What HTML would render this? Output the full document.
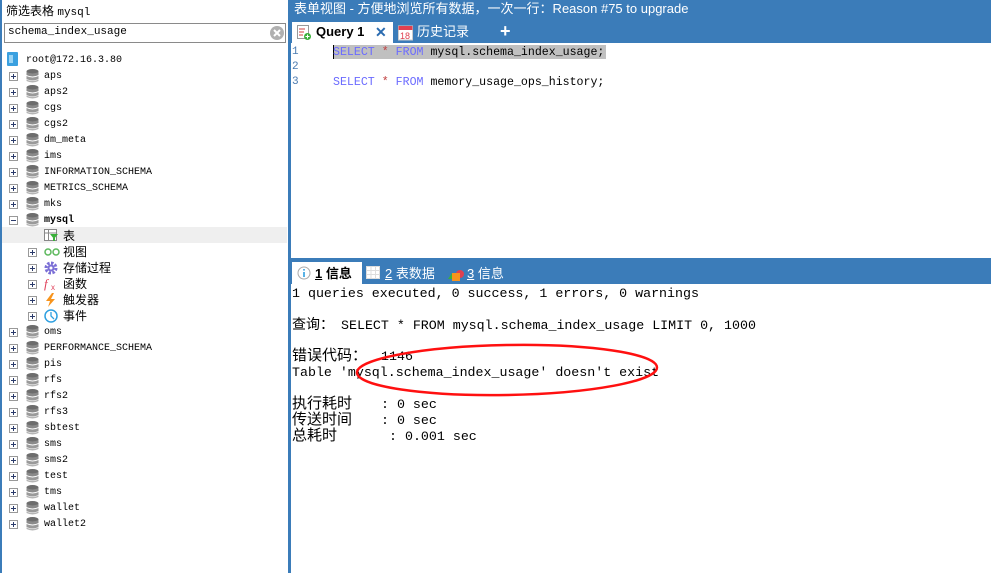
<!DOCTYPE html>
<html><head><meta charset="utf-8"><style>
*{margin:0;padding:0;box-sizing:border-box}
body{width:991px;height:573px;overflow:hidden;background:#fff;position:relative;font-family:"Liberation Mono","Noto Sans CJK SC",monospace}
.abs{position:absolute}
.cjk{font-family:"Liberation Sans","Noto Sans CJK SC",sans-serif}
#left{left:0;top:0;width:291px;height:573px;border-left:2px solid #3b7cb9;border-right:3px solid #3b7cb9;background:#fff}
.row{position:absolute;height:16px;font-size:10px;line-height:16px;color:#000;white-space:nowrap}
.pb{position:absolute;width:9px;height:9px;border:1px solid #999;background:#fff;top:4px}
.pb:before{content:"";position:absolute;left:1px;top:3px;width:5px;height:1px;background:#2b3b6b}
.pb.p:after{content:"";position:absolute;left:3px;top:1px;width:1px;height:5px;background:#2b3b6b}
.mono{font-family:"Liberation Mono",monospace}
.o{position:absolute;font-size:13.3px;line-height:16px;white-space:pre;font-family:"Liberation Mono","Noto Sans CJK SC",monospace}
</style></head><body>
<div id="left" class="abs">
 <div class="abs cjk" style="left:4px;top:2px;font-size:12px;">筛选表格 <span class="mono" style="font-size:11px">mysql</span></div>
 <div class="abs" style="left:2px;top:23px;width:282px;height:20px;border:1px solid #8a8a8a;background:#fff">
  <span class="abs mono" style="left:3px;top:2px;font-size:11px">schema_index_usage</span>
  <svg class="abs" style="left:264px;top:1px" width="16" height="16"><circle cx="8" cy="8" r="7" fill="#b0b0b0"/><path d="M5 5L11 11M11 5L5 11" stroke="#fff" stroke-width="2"/></svg>
 </div>
</div>
<svg class="abs" style="left:7px;top:52px" width="12" height="15"><rect x="0" y="0" width="11" height="14" rx="1" fill="#3aa0e0"/><rect x="2" y="3" width="4" height="8" fill="#9ad4f5"/></svg>
<div class="row" style="left:26px;top:53px">root@172.16.3.80</div>
<div id="tree"></div>
<script>
var dbs=[["aps",75],["aps2",91],["cgs",107],["cgs2",123],["dm_meta",139],["ims",155],["INFORMATION_SCHEMA",171],["METRICS_SCHEMA",187],["mks",203],["mysql",219],["oms",331],["PERFORMANCE_SCHEMA",347],["pis",363],["rfs",379],["rfs2",395],["rfs3",411],["sbtest",427],["sms",443],["sms2",459],["test",475],["tms",491],["wallet",507],["wallet2",523]];
var h="";
dbs.forEach(function(d){var y=d[1]-6;var m=d[0]=="mysql";
h+='<div class="pb '+(m?'':'p')+'" style="left:9px;top:'+(y+3)+'px"></div>';
h+='<svg class="abs" style="left:26px;top:'+(y)+'px" width="13" height="14"><ellipse cx="6.5" cy="2.5" rx="6" ry="2.5" fill="#6d6d6d"/><path d="M0.5 3v3q6 3 12 0v-3q-6 3 -12 0z" fill="#8a8a8a"/><path d="M0.5 7v3q6 3 12 0v-3q-6 3 -12 0z" fill="#9a9a9a"/><path d="M0.5 10.5v1.5q6 3 12 0v-1.5q-6 3 -12 0z" fill="#b5b5b5"/></svg>';
h+='<div class="row" style="left:44px;top:'+y+'px;'+(m?'font-weight:bold':'')+'">'+d[0]+'</div>';});
h+='<div class="abs" style="left:2px;top:227px;width:285px;height:16px;background:#efefef"></div>';
h+='<svg class="abs" style="left:44px;top:229px" width="15" height="13"><rect x="0.5" y="0.5" width="12" height="11" fill="#fff" stroke="#888"/><path d="M0.5 4h12M4.5 0.5v11" stroke="#888"/><path d="M6 5h8l-4 5z" fill="#3ab03a"/><rect x="9" y="9" width="2" height="3" fill="#3ab03a"/></svg>';
h+='<div class="row cjk" style="left:63px;top:228px;font-size:12px">表</div>';
var ch=[["视图",251],["存储过程",267],["函数",283],["触发器",299],["事件",315]];
var ic=['<svg width="16" height="14"><circle cx="4" cy="7" r="3" fill="none" stroke="#5cb85c" stroke-width="1.5"/><circle cx="12" cy="7" r="3" fill="none" stroke="#5cb85c" stroke-width="1.5"/></svg>',
'<svg width="16" height="14"><circle cx="7" cy="7" r="5" fill="none" stroke="#7b6fd6" stroke-width="3" stroke-dasharray="2.5 1.4"/><circle cx="7" cy="7" r="3.5" fill="#7b6fd6"/><circle cx="7" cy="7" r="1.5" fill="#fff"/></svg>',
'<svg width="16" height="14"><text x="0" y="11" font-size="13" font-style="italic" fill="#e0405a" font-family="Liberation Serif">f</text><text x="7" y="13" font-size="8" fill="#e0405a" font-family="Liberation Sans">x</text></svg>',
'<svg width="16" height="14"><path d="M8 0L2 8h4l-2 6l7-8h-4l3-6z" fill="#f7941d"/></svg>',
'<svg width="16" height="14"><circle cx="7" cy="7" r="6" fill="none" stroke="#2fa0e0" stroke-width="1.5"/><path d="M7 3v4l3 3" fill="none" stroke="#2fa0e0" stroke-width="1.3"/></svg>'];
ch.forEach(function(c,i){var y=c[1]-7;
h+='<div class="pb p" style="left:28px;top:'+(y+4)+'px"></div>';
h+='<div class="abs" style="left:44px;top:'+(y+1)+'px">'+ic[i]+'</div>';
h+='<div class="row cjk" style="left:63px;top:'+y+'px;font-size:12px">'+c[0]+'</div>';});
document.getElementById("tree").innerHTML=h;
</script>
<!-- right -->
<div class="abs" style="left:291px;top:0;width:700px;height:43px;background:#3b7cb9"></div>
<div class="abs cjk" style="left:294px;top:0;font-size:13px;color:#fff;line-height:17px">表单视图 - 方便地浏览所有数据，一次一行：Reason #75 to upgrade</div>
<div class="abs" style="left:292px;top:22px;width:101px;height:21px;background:#fff"></div>
<svg class="abs" style="left:297px;top:25px" width="15" height="16"><rect x="0.5" y="0.5" width="11" height="13" fill="#fff" stroke="#999"/><path d="M2 4h6M2 7h5M2 10h4" stroke="#d04040"/><circle cx="10.5" cy="11.5" r="3.5" fill="#3ab03a"/><path d="M10.5 9.5v4M8.5 11.5h4" stroke="#fff"/></svg>
<div class="abs cjk" style="left:316px;top:24px;font-size:13px;font-weight:bold;line-height:16px">Query 1</div>
<div class="abs cjk" style="left:375px;top:23px;font-size:14px;font-weight:bold;color:#2a6bb0;line-height:18px">✕</div>
<svg class="abs" style="left:398px;top:24px" width="16" height="17"><rect x="0.5" y="2" width="14" height="14" fill="#fff" stroke="#ccc"/><rect x="0.5" y="2" width="14" height="4" fill="#e04050"/><text x="2" y="15" font-size="9" fill="#e04050" font-family="Liberation Sans">18</text></svg>
<div class="abs cjk" style="left:417px;top:23px;font-size:13px;color:#fff;line-height:17px">历史记录</div>
<div class="abs cjk" style="left:500px;top:20px;font-size:18px;font-weight:bold;color:#fff;line-height:22px">+</div>
<div class="abs" style="left:334px;top:45px;width:272px;height:14px;background:#c0c0c0"></div>
<div class="abs" style="left:333px;top:45px;width:1px;height:14px;background:#000"></div>
<div class="abs" style="left:292px;top:45px;font-size:11px;color:#4a7ab0;line-height:15px">1<br>2<br>3</div>
<div class="abs" style="left:333px;top:45px;font-size:11.6px;line-height:15px;white-space:pre"><span style="color:#6b6bff">SELECT</span> <span style="color:#c04040">*</span> <span style="color:#6b6bff">FROM</span> mysql.schema_index_usage;

<span style="color:#6b6bff">SELECT</span> <span style="color:#c04040">*</span> <span style="color:#6b6bff">FROM</span> memory_usage_ops_history;</div>
<div class="abs" style="left:291px;top:258px;width:700px;height:26px;background:#3b7cb9"></div>
<div class="abs" style="left:292px;top:262px;width:70px;height:22px;background:#fff"></div>
<svg class="abs" style="left:297px;top:266px" width="14" height="14"><circle cx="7" cy="7" r="6" fill="#fff" stroke="#aaa"/><rect x="6.2" y="6" width="1.6" height="5" fill="#2fa0e0"/><rect x="6.2" y="3" width="1.6" height="1.6" fill="#2fa0e0"/></svg>
<div class="abs cjk" style="left:315px;top:265px;font-size:13px;font-weight:bold;line-height:17px"><u>1</u> 信息</div>
<svg class="abs" style="left:366px;top:266px" width="14" height="13"><rect x="0.5" y="0.5" width="13" height="12" fill="#fff" stroke="#ddd"/><path d="M0.5 4.5h13M0.5 8.5h13M5 0.5v12M9.5 0.5v12" stroke="#ddd"/></svg>
<div class="abs cjk" style="left:385px;top:265px;font-size:13px;color:#fff;line-height:17px"><u>2</u> 表数据</div>
<svg class="abs" style="left:448px;top:268px" width="18" height="13"><path d="M0 11l4-6 4 6z" fill="#3ab03a"/><circle cx="12" cy="6" r="4" fill="#e04050"/><rect x="4" y="5" width="8" height="8" fill="#f7941d"/></svg>
<div class="abs cjk" style="left:467px;top:265px;font-size:13px;color:#fff;line-height:17px"><u>3</u> 信息</div>
<div class="o" style="left:292px;top:286px">1 queries executed, 0 success, 1 errors, 0 warnings</div>
<div class="o" style="left:292px;top:318px;font-size:14px">查询：</div>
<div class="o" style="left:341px;top:318px">SELECT * FROM mysql.schema_index_usage LIMIT 0, 1000</div>
<div class="o" style="left:292px;top:349px;font-size:15px">错误代码：</div>
<div class="o" style="left:381px;top:349px">1146</div>
<div class="o" style="left:292px;top:365px">Table 'mysql.schema_index_usage' doesn't exist</div>
<div class="o" style="left:292px;top:397px;font-size:15px">执行耗时</div>
<div class="o" style="left:381px;top:397px">: 0 sec</div>
<div class="o" style="left:292px;top:413px;font-size:15px">传送时间</div>
<div class="o" style="left:381px;top:413px">: 0 sec</div>
<div class="o" style="left:292px;top:429px;font-size:15px">总耗时</div>
<div class="o" style="left:389px;top:429px">: 0.001 sec</div>
<svg class="abs" style="left:330px;top:335px" width="340" height="70"><ellipse cx="177" cy="35" rx="150" ry="25" fill="none" stroke="#ff1010" stroke-width="2.5" transform="rotate(-1 177 35)"/></svg>
</body></html>
